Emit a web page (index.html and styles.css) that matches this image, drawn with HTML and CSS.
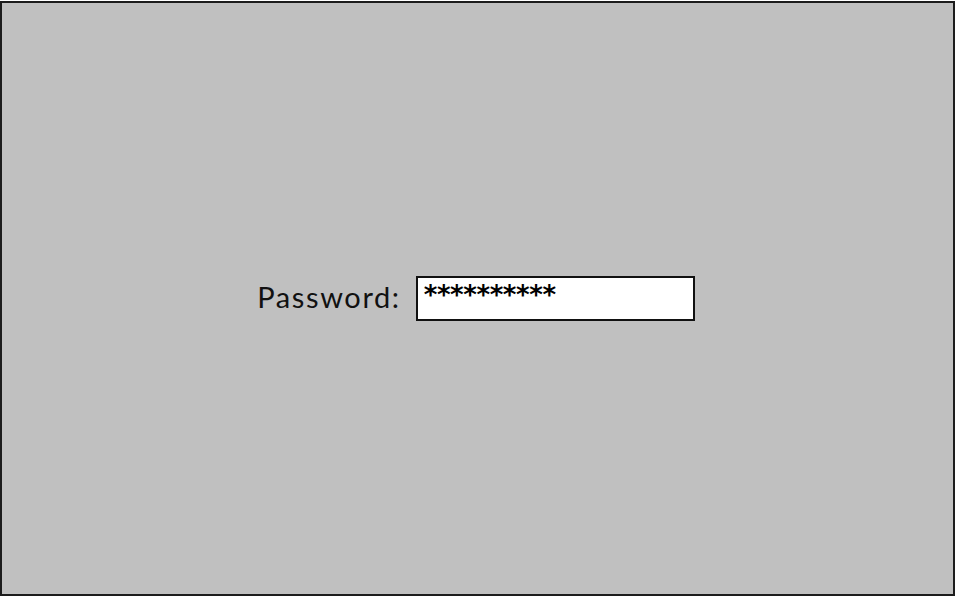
FILE: index.html
```html
<!DOCTYPE html>
<html>
<head>
<meta charset="utf-8">
<link rel="stylesheet" href="styles.css">
</head>
<body>
<div class="frame">
  <div class="row">
    <span class="label">Password:</span>
    <div class="field"><span class="mask">**********</span></div>
  </div>
</div>
</body>
</html>
```
FILE: styles.css
```css
html, body {
  margin: 0;
  padding: 0;
  background: #ffffff;
}
.frame {
  box-sizing: border-box;
  width: 955px;
  margin-top: 1px;
  height: 595px;
  background: #c0c0c0;
  border: 2px solid #1c1c1c;
  display: flex;
  align-items: center;
  justify-content: center;
}
.row {
  display: flex;
  align-items: center;
  gap: 15px;
  padding-right: 3px;
}
.label {
  font-family: "Lato", "DejaVu Sans", sans-serif;
  font-size: 29px;
  color: #111;
  letter-spacing: 1.6px;
  padding-bottom: 5px;
}
.field {
  box-sizing: border-box;
  width: 279px;
  height: 45px;
  background: #fff;
  border: 2px solid #111;
  padding: 5px 0 0 6px;
}
.mask {
  font-family: "DejaVu Sans", sans-serif;
  font-weight: bold;
  font-size: 26px;
  letter-spacing: -0.4px;
  color: #000;
  line-height: 25px;
  display: block;
}
```
